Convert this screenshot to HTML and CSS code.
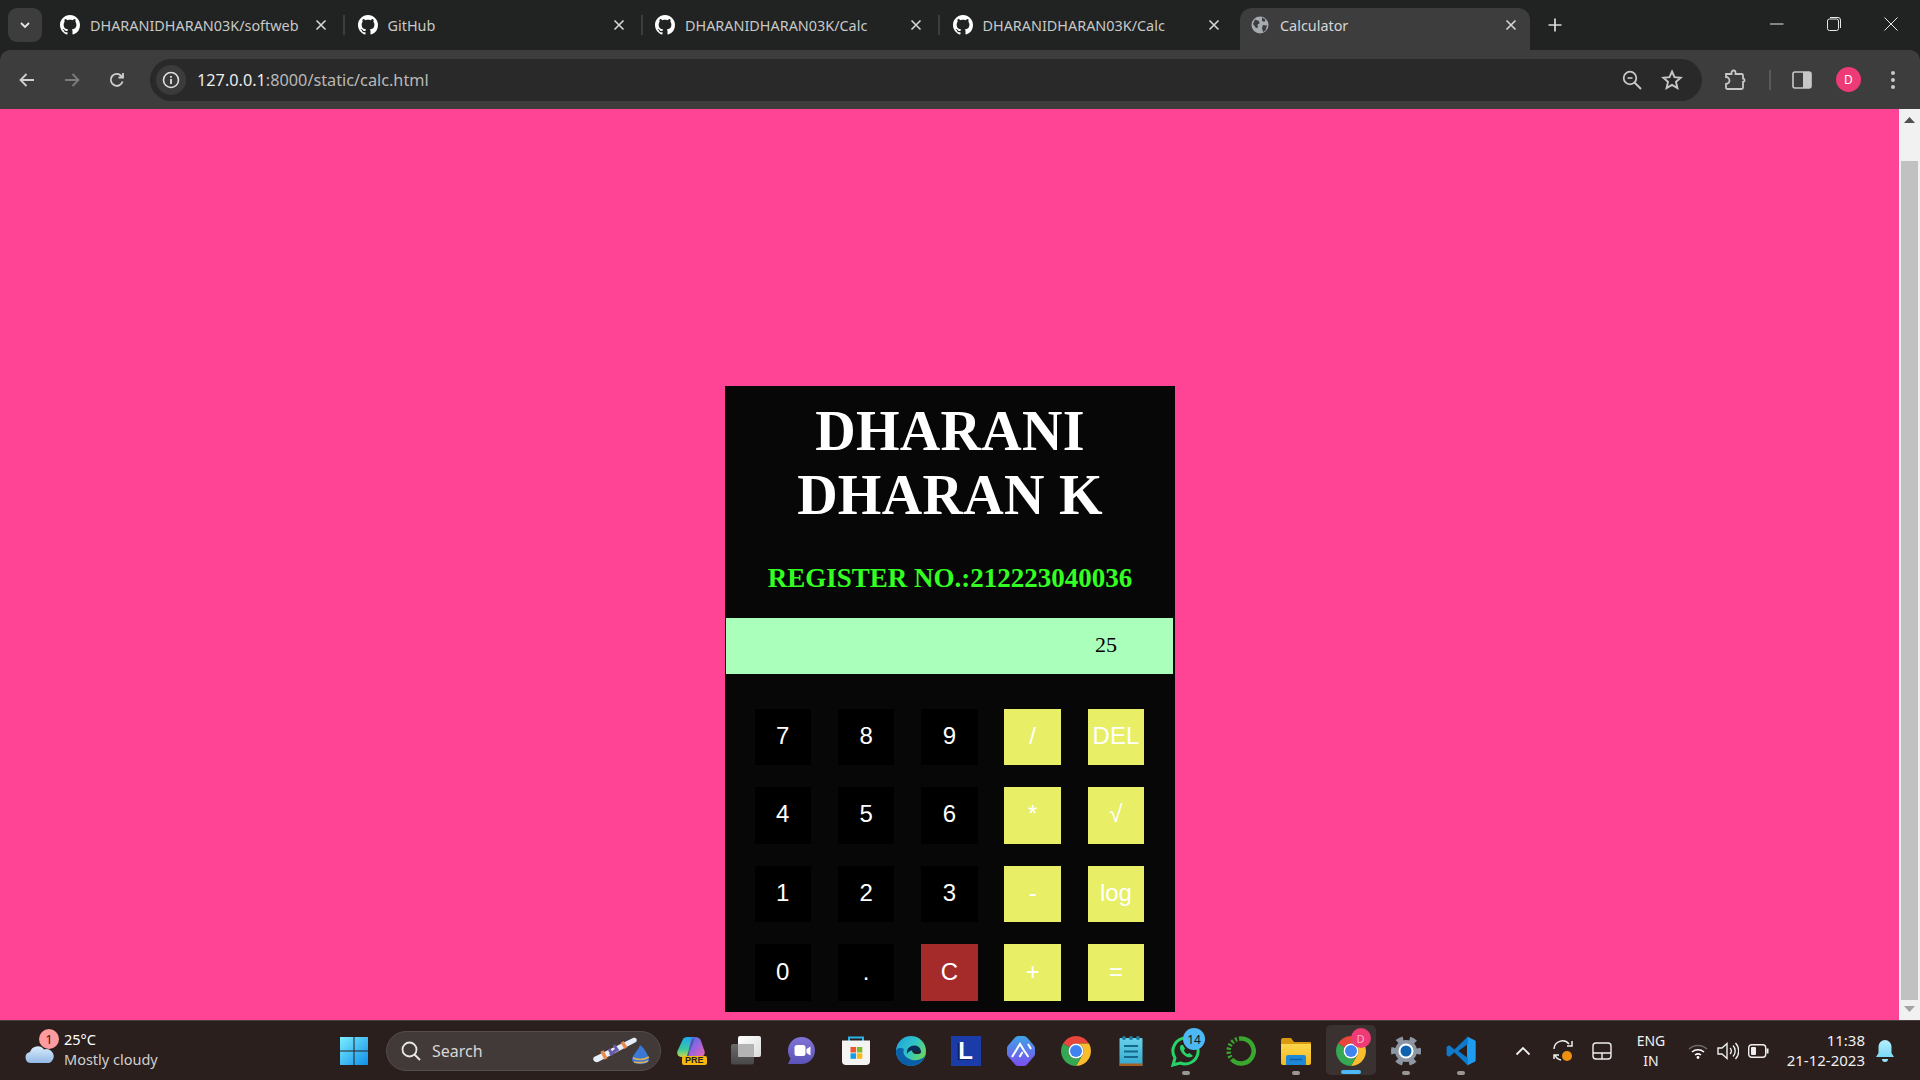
FILE: index.html
```html
<!DOCTYPE html>
<html lang="en">
<head>
<meta charset="utf-8">
<title>Calculator</title>
<link rel="stylesheet" href="styles.css">
</head>
<body>
<svg class="defs" width="0" height="0" aria-hidden="true">
  <defs>
    <symbol id="gh" viewBox="0 0 16 16"><path fill="#fff" d="M8 0C3.58 0 0 3.58 0 8c0 3.54 2.29 6.53 5.47 7.59.4.07.55-.17.55-.38 0-.19-.01-.82-.01-1.49-2.01.37-2.53-.49-2.69-.94-.09-.23-.48-.94-.82-1.13-.28-.15-.68-.52-.01-.53.63-.01 1.08.58 1.23.82.72 1.21 1.87.87 2.33.66.07-.52.28-.87.51-1.07-1.78-.2-3.64-.89-3.64-3.95 0-.87.31-1.59.82-2.15-.08-.2-.36-1.02.08-2.12 0 0 .67-.21 2.2.82.64-.18 1.32-.27 2-.27.68 0 1.36.09 2 .27 1.53-1.04 2.2-.82 2.2-.82.44 1.1.16 1.92.08 2.12.51.56.82 1.27.82 2.15 0 3.07-1.87 3.75-3.65 3.95.29.25.54.73.54 1.48 0 1.07-.01 1.93-.01 2.2 0 .21.15.46.55.38A8.013 8.013 0 0016 8c0-4.42-3.58-8-8-8z"/></symbol>
    <symbol id="x" viewBox="0 0 12 12"><path d="M1.5 1.5l9 9M10.5 1.5l-9 9" stroke="#d6d6d6" stroke-width="1.6" fill="none"/></symbol>
    <symbol id="chrome" viewBox="0 0 24 24">
      <path fill="#e8453c" d="M3.34 7A10 10 0 0 1 20.66 7H12A5 5 0 0 0 7.67 9.5Z"/>
      <path fill="#f9bc2d" d="M20.66 7A10 10 0 0 1 12 22L16.33 14.5A5 5 0 0 0 12 7Z"/>
      <path fill="#35a853" d="M3.34 7A10 10 0 0 0 12 22L16.33 14.5A5 5 0 0 1 7.67 9.5Z"/>
      <circle cx="12" cy="12" r="5" fill="#fff"/><circle cx="12" cy="12" r="4" fill="#3f83f0"/>
    </symbol>
    <linearGradient id="gWin" x1="0" y1="0" x2="1" y2="1"><stop offset="0" stop-color="#7beeff"/><stop offset="1" stop-color="#0f8ee8"/></linearGradient>
    <linearGradient id="gCloud" x1="0" y1="0" x2="0" y2="1"><stop offset="0" stop-color="#d9ecfb"/><stop offset="1" stop-color="#93b9e6"/></linearGradient>
    <linearGradient id="gCopL" x1="0" y1="0" x2="0" y2="1"><stop offset="0" stop-color="#1fa6ee"/><stop offset=".6" stop-color="#38c8a0"/><stop offset="1" stop-color="#c8d84a"/></linearGradient>
    <linearGradient id="gCopR" x1="0" y1="0" x2="1" y2="1"><stop offset="0" stop-color="#2f7fe8"/><stop offset=".5" stop-color="#9a62e0"/><stop offset="1" stop-color="#ee6aa8"/></linearGradient>
    <linearGradient id="gEdge" x1="0" y1="0" x2="1" y2=".6"><stop offset="0" stop-color="#1f9fe0"/><stop offset=".55" stop-color="#2fc4c8"/><stop offset="1" stop-color="#6cd65e"/></linearGradient>
    <linearGradient id="gMeet" x1="0" y1="0" x2="0" y2="1"><stop offset="0" stop-color="#8173d6"/><stop offset="1" stop-color="#5b53b8"/></linearGradient>
    <linearGradient id="gAnt" x1="0" y1="0" x2="0" y2="1"><stop offset="0" stop-color="#3fa4e6"/><stop offset="1" stop-color="#7a4ff0"/></linearGradient>
    <linearGradient id="gNote" x1="0" y1="0" x2="0" y2="1"><stop offset="0" stop-color="#68d0ea"/><stop offset="1" stop-color="#35a9d0"/></linearGradient>
    <linearGradient id="gBell" x1="0" y1="0" x2="0" y2="1"><stop offset="0" stop-color="#b5f0ff"/><stop offset="1" stop-color="#7ad8f5"/></linearGradient>
    <linearGradient id="gTvD" x1="0" y1="0" x2="0" y2="1"><stop offset="0" stop-color="#6a6a6a"/><stop offset="1" stop-color="#474747"/></linearGradient>
    <linearGradient id="gTvL" x1="0" y1="0" x2="1" y2="1"><stop offset="0" stop-color="#ffffff"/><stop offset="1" stop-color="#dcdcdc"/></linearGradient>
    <linearGradient id="gFold" x1="0" y1="0" x2="0" y2="1"><stop offset="0" stop-color="#fbd64a"/><stop offset="1" stop-color="#f2bb22"/></linearGradient>
  </defs>
</svg>

<header class="tabstrip">
  <button class="tab-search" type="button" aria-label="Search tabs">
    <svg width="12" height="12" viewBox="0 0 12 12"><path d="M2 4l4 4 4-4" fill="none" stroke="#e8e8e8" stroke-width="1.8"/></svg>
  </button>
  <div class="tab tab-sep">
    <svg class="fav" viewBox="0 0 16 16"><use href="#gh"/></svg><span class="tab-title">DHARANIDHARAN03K/softweb</span>
    <svg class="tab-x"><use href="#x"/></svg>
  </div>
  <div class="tab tab-sep">
    <svg class="fav" viewBox="0 0 16 16"><use href="#gh"/></svg><span class="tab-title">GitHub</span>
    <svg class="tab-x"><use href="#x"/></svg>
  </div>
  <div class="tab tab-sep">
    <svg class="fav" viewBox="0 0 16 16"><use href="#gh"/></svg><span class="tab-title">DHARANIDHARAN03K/Calc</span>
    <svg class="tab-x"><use href="#x"/></svg>
  </div>
  <div class="tab">
    <svg class="fav" viewBox="0 0 16 16"><use href="#gh"/></svg><span class="tab-title">DHARANIDHARAN03K/Calc</span>
    <svg class="tab-x"><use href="#x"/></svg>
  </div>
  <div class="tab tab-active">
    <svg class="fav" viewBox="0 0 20 20"><circle cx="10" cy="10" r="8.5" fill="#a6abb2"/><path fill="#3d3d3d" d="M5 4.5l4 1.5 .5 2.5-2 1 .5 3-2 .5-3-4zM12 2.5l3.5 2-1 2.5-2.500-1zM13 10l4 .5-1.500 5-2.500 1.500-1-4z"/></svg>
    <span class="tab-title tab-title-active">Calculator</span>
    <svg class="tab-x"><use href="#x"/></svg>
  </div>
  <svg class="new-tab" width="16" height="16" viewBox="0 0 16 16"><path d="M8 1.5v13M1.5 8h13" stroke="#dcdcdc" stroke-width="1.7"/></svg>
  <div class="win-controls">
    <svg width="14" height="14" viewBox="0 0 14 14"><path d="M0 7h13.5" stroke="#e8e8e8"/></svg>
    <svg width="14" height="14" viewBox="0 0 14 14"><rect x=".5" y="2" width="11" height="11.5" rx="2" fill="none" stroke="#e8e8e8"/><path d="M3 .5h8a2.500 2.500 0 0 1 2.500 2.500v8" fill="none" stroke="#e8e8e8"/></svg>
    <svg width="14" height="14" viewBox="0 0 14 14"><path d="M.5.5l13 13M13.500.5l-13 13" stroke="#e8e8e8"/></svg>
  </div>
</header>

<nav class="toolbar">
  <svg class="tool" viewBox="0 0 20 20"><path d="M17 10H4M9.5 4L3.500 10l6 6" fill="none" stroke="#d0d0d0" stroke-width="1.8"/></svg>
  <svg class="tool" viewBox="0 0 20 20"><path d="M3 10h13M10.5 4l6 6-6 6" fill="none" stroke="#7d7d7d" stroke-width="1.8"/></svg>
  <svg class="tool" viewBox="0 0 20 20"><path d="M15.6 11.5A6 6 0 1 1 14.300 5.800L16 7.500M16 3v4.500h-4.500" fill="none" stroke="#d0d0d0" stroke-width="1.8"/></svg>
  <div class="omnibox">
    <span class="info-chip">
      <svg width="18" height="18" viewBox="0 0 18 18"><circle cx="9" cy="9" r="7.5" fill="none" stroke="#e0e0e0" stroke-width="1.6"/><path d="M9 8v5M9 5v1.700" stroke="#e0e0e0" stroke-width="1.8"/></svg>
    </span>
    <span class="url"><b class="url-host">127.0.0.1</b>:8000/static/calc.html</span>
    <svg class="omni-zoom" width="22" height="22" viewBox="0 0 22 22"><circle cx="9" cy="9" r="6.3" fill="none" stroke="#c8c8c8" stroke-width="1.8"/><path d="M13.500 13.500L20 20" stroke="#c8c8c8" stroke-width="1.9"/><path d="M6.500 9h5" stroke="#c8c8c8" stroke-width="1.6"/></svg>
    <svg class="omni-star" width="22" height="22" viewBox="0 0 22 22"><path d="M11 2.500l2.500 5.700 6.200.6-4.700 4.100 1.400 6.100L11 15.900l-5.400 3.100 1.400-6.100-4.700-4.100 6.200-.6z" fill="none" stroke="#c8c8c8" stroke-width="1.9"/></svg>
  </div>
  <svg class="tool-ext" width="22" height="22" viewBox="0 0 22 22"><path d="M2 5h5.500V3.500a2 2 0 0 1 4 0V5H17.500a1.500 1.500 0 0 1 1.500 1.500V9.500h.5a2 2 0 0 1 0 3.500H19v5.500a1.500 1.500 0 0 1-1.500 1.500H3.500A1.500 1.500 0 0 1 2 18.500V15a3.500 3.500 0 0 0 0-7z" fill="none" stroke="#c8c8c8" stroke-width="1.8"/></svg>
  <span class="tool-sep"></span>
  <svg class="tool-side" width="20" height="20" viewBox="0 0 20 20"><rect x="1" y="2" width="18" height="16" rx="2" fill="none" stroke="#c8c8c8" stroke-width="1.6"/><path d="M11 2h6a2 2 0 0 1 2 2v12a2 2 0 0 1-2 2h-6z" fill="#c8c8c8"/></svg>
  <span class="avatar">D</span>
  <svg class="tool-menu" width="6" height="20" viewBox="0 0 6 20"><circle cx="3" cy="3" r="2" fill="#c8c8c8"/><circle cx="3" cy="10" r="2" fill="#c8c8c8"/><circle cx="3" cy="17" r="2" fill="#c8c8c8"/></svg>
</nav>

<div class="viewport">
  <main class="page">
    <section class="calc">
      <h1 class="calc-name">DHARANI<br>DHARAN K</h1>
      <h2 class="calc-reg">REGISTER NO.:212223040036</h2>
      <div class="calc-display">25</div>
      <div class="calc-keys">
        <button class="key" type="button">7</button>
        <button class="key" type="button">8</button>
        <button class="key" type="button">9</button>
        <button class="key key-op" type="button">/</button>
        <button class="key key-op" type="button">DEL</button>
        <button class="key" type="button">4</button>
        <button class="key" type="button">5</button>
        <button class="key" type="button">6</button>
        <button class="key key-op" type="button">*</button>
        <button class="key key-op" type="button">√</button>
        <button class="key" type="button">1</button>
        <button class="key" type="button">2</button>
        <button class="key" type="button">3</button>
        <button class="key key-op" type="button">-</button>
        <button class="key key-op" type="button">log</button>
        <button class="key" type="button">0</button>
        <button class="key" type="button">.</button>
        <button class="key key-clear" type="button">C</button>
        <button class="key key-op" type="button">+</button>
        <button class="key key-op" type="button">=</button>
      </div>
    </section>
  </main>
  <aside class="scrollbar">
    <svg width="11" height="6" viewBox="0 0 11 6"><path d="M5.5 0L11 6H0z" fill="#505050"/></svg>
    <div class="thumb"></div>
    <svg width="11" height="6" viewBox="0 0 11 6"><path d="M5.5 6L11 0H0z" fill="#a3a3a3"/></svg>
  </aside>
</div>

<footer class="taskbar">
  <div class="weather">
    <span class="weather-icon">
      <svg width="30" height="20" viewBox="0 0 30 20"><path d="M6 19a5.500 5.500 0 0 1-1-10.900A8 8 0 0 1 19 5.500 6.800 6.800 0 0 1 24 19z" fill="url(#gCloud)"/></svg>
      <span class="weather-badge">1</span>
    </span>
    <span class="weather-text"><span class="temp">25°C</span><span class="cond">Mostly cloudy</span></span>
  </div>
  <span class="tb-item">
    <svg width="30" height="30" viewBox="0 0 30 30"><path fill="url(#gWin)" d="M1 1h13.500v13.500H1zM15.500 1H29v13.500H15.500zM1 15.500h13.500V29H1zM15.500 15.500H29V29H15.500z"/></svg>
  </span>
  <div class="search">
    <svg width="22" height="22" viewBox="0 0 22 22"><circle cx="9.5" cy="9.5" r="7" fill="none" stroke="#e8e8e8" stroke-width="1.8"/><path d="M14.500 14.500L20 20" stroke="#e8e8e8" stroke-width="2"/></svg>
    <span class="search-label">Search</span>
    <svg class="search-art" width="66" height="32" viewBox="0 0 66 32">
      <path d="M3 22L42 3c3-1 5 2 3 4L7 27c-4 1-6-3-4-5z" fill="#e6eef8"/>
      <path d="M11 16l4 8M31 7l4 6" stroke="#e88a4c" stroke-width="3.5"/>
      <path d="M18 14l3 5M23 10l4 6M19 20l6-5" stroke="#6a5aa8" stroke-width="3"/>
      <path d="M49 10c5 3 9 12 9 15 0 5-16 6-17 0 0-5 6-9 8-15z" fill="#3b78d4"/>
      <path d="M42 23c5 2 11 2 16-1M43 27c5 1 10 1 14-1" stroke="#e0b050" stroke-width="1.6" fill="none"/>
    </svg>
  </div>
  <span class="tb-item tb-copilot">
    <svg width="28" height="20" viewBox="0 0 28 20"><path d="M6 2C7 .5 9 0 11 0h6L10 20H5C1 20-.5 17 .5 14z" fill="url(#gCopL)"/><path d="M14 0h4c3 0 5 1 6 4l3.500 10c1 3-1 6-4.500 6H11z" fill="url(#gCopR)"/><path d="M9 0h10c-3 1-4 3-5 6L11 15c-1 2-1 4-1 5l6-14c1-3 1-5 3-6z" fill="#1c1c22" opacity=".35"/></svg>
    <span class="pre">PRE</span>
  </span>
  <span class="tb-item">
    <svg width="32" height="30" viewBox="0 0 32 30"><rect x="1" y="8" width="23" height="20.500" rx="2" fill="url(#gTvD)"/><rect x="8" y="0" width="23" height="21" rx="2" fill="url(#gTvL)"/><rect x="8" y="8" width="16" height="13" rx="1" fill="#b4b4b4"/></svg>
  </span>
  <span class="tb-item">
    <svg width="30" height="30" viewBox="0 0 30 30"><path d="M15.500 1C23 1 29 7 29 14.500S23 28 15.500 28H2l2.500-5.500C2.800 20.200 2 17.500 2 14.500 2 7 8 1 15.500 1z" fill="url(#gMeet)"/><rect x="8.500" y="9" width="11" height="11" rx="2.500" fill="#fff"/><path d="M20.500 13l4-2.500v9l-4-2.500z" fill="#fff"/></svg>
  </span>
  <span class="tb-item">
    <svg width="30" height="30" viewBox="0 0 30 30"><path d="M8 6V1.500h14V6" fill="none" stroke="#2bb3e8" stroke-width="2"/><path d="M1 4.500h28V25a4 4 0 0 1-4 4H5a4 4 0 0 1-4-4z" fill="#f4f4f4"/><rect x="9.500" y="11" width="5.500" height="5.500" fill="#f0532e"/><rect x="15.800" y="11" width="5.500" height="5.500" fill="#7fba2a"/><rect x="9.500" y="17.300" width="5.500" height="5.500" fill="#0d9fe8"/><rect x="15.800" y="17.300" width="5.500" height="5.500" fill="#fcb913"/></svg>
  </span>
  <span class="tb-item">
    <svg width="30" height="30" viewBox="0 0 30 30"><circle cx="15" cy="15" r="15" fill="url(#gEdge)"/><path d="M0 15C0 24 7 30 15 30c7 0 12-4 14-10-4 4-9 5-13 4C9 22 6 17 8 13 4 11 1 12 0 15z" fill="#0b5ea8"/><path d="M11 18c-1-5 3-9 8-8.500 4 .5 6 3 6 7-1 1.500-5 2-7.500.5-1-1-1-2-1.500-2.500-2 0-4 1.500-5 3.500z" fill="#0a2c55"/><path d="M16 15.500c2-.5 6 0 9 1-1 1.500-5 2-7.500.5-1-1-1-1-1.500-1.500z" fill="#2a1f1d"/></svg>
  </span>
  <span class="tb-item"><span class="logo-l">L</span></span>
  <span class="tb-item">
    <svg width="28" height="30" viewBox="0 0 28 30"><path d="M8 1.500c1-1 2-1.500 3-1.500h6c1 0 2 .5 3 1.500l6.500 7.500c.8 1 1.500 2 1.500 3v6c0 1-.7 2-1.500 3L20 28.500c-1 1-2 1.500-3 1.500h-6c-1 0-2-.5-3-1.500L1.500 21C.7 20 0 19 0 18v-6c0-1 .7-2 1.500-3z" fill="url(#gAnt)"/><path d="M5 21L13 8l4 6.500M12.500 21l3-5M17 14.500l4.500 6.500M21 8l3 5" fill="none" stroke="#fff" stroke-width="2"/></svg>
  </span>
  <span class="tb-item"><svg width="30" height="30" viewBox="2 2 20 20"><use href="#chrome" width="24" height="24"/></svg></span>
  <span class="tb-item">
    <svg width="24" height="30" viewBox="0 0 24 30"><rect x=".5" y="2" width="23" height="28" rx="1" fill="url(#gNote)"/><rect x=".5" y="27.500" width="23" height="2.500" fill="#a85f24"/><circle cx="5" cy="2" r="2" fill="#1f7d9e"/><circle cx="12" cy="2" r="2" fill="#1f7d9e"/><circle cx="19" cy="2" r="2" fill="#1f7d9e"/><path d="M5 10h14M5 15.500h14M5 21h14" stroke="#116a8c" stroke-width="2.200"/></svg>
  </span>
  <span class="tb-item">
    <svg width="32" height="32" viewBox="0 0 32 32"><path d="M16 3a13 13 0 0 0-11 20L3 30l7.200-2A13 13 0 1 0 16 3z" fill="none" stroke="#27d366" stroke-width="3"/><path d="M11 10c-2 2-1 6 2.500 9.500S21 23 23 21l-3.500-3-2 1c-1.500-.5-3-2-3.500-3.500l1-2-2-3.500z" fill="#27d366"/></svg>
    <span class="tb-count">14</span><span class="tb-dot"></span>
  </span>
  <span class="tb-item">
    <svg width="30" height="30" viewBox="0 0 30 30"><path d="M15 2.500a12.500 12.500 0 1 1-9 21" fill="none" stroke="#3aa82e" stroke-width="4.500"/><path d="M15 2.500A12.500 12.500 0 0 0 6 23.500" fill="none" stroke="#3aa82e" stroke-width="4.500" stroke-dasharray="2 2"/></svg>
  </span>
  <span class="tb-item">
    <svg width="32" height="28" viewBox="0 0 32 28"><path d="M1 3a2 2 0 0 1 2-2h8l3 4h16a1 1 0 0 1 1 1v4H1z" fill="#d99a10"/><path d="M1 7h30v19a2 2 0 0 1-2 2H3a2 2 0 0 1-2-2z" fill="url(#gFold)"/><path d="M6 20a2 2 0 0 1 2-2h16a2 2 0 0 1 2 2v8H6z" fill="#1e88d8"/><path d="M10 22.500h12" stroke="#0d5fa8" stroke-width="1.500"/></svg>
    <span class="tb-dot"></span>
  </span>
  <span class="tb-item tb-active">
    <svg width="30" height="30" viewBox="2 2 20 20"><use href="#chrome" width="24" height="24"/></svg>
    <span class="tb-profile">D</span><span class="tb-bar"></span>
  </span>
  <span class="tb-item">
    <svg width="30" height="30" viewBox="0 0 30 30"><circle cx="15" cy="15" r="11" fill="#8d97a3"/><circle cx="15" cy="15" r="12.500" fill="none" stroke="#8d97a3" stroke-width="5" stroke-dasharray="6.500 6.590" stroke-dashoffset="3.250"/><circle cx="15" cy="15" r="7.500" fill="#fff"/><circle cx="15" cy="15" r="5.500" fill="#0f62b0"/></svg>
    <span class="tb-dot"></span>
  </span>
  <span class="tb-item">
    <svg width="30" height="30" viewBox="0 0 100 100"><path d="M70 2l26 12c2 1 3 3 3 5v62c0 2-1 4-3 5L70 98z" fill="#1f9cf0"/><path d="M73 2L28 45 11 31 2 36v28l9 5 17-14 45 43V73L41 50l32-23z" fill="#0e7acb"/></svg>
    <span class="tb-dot"></span>
  </span>
  <span class="tray tray-chevron"><svg width="16" height="10" viewBox="0 0 16 10"><path d="M1.500 8.500L8 2l6.500 6.500" fill="none" stroke="#f0f0f0" stroke-width="1.8"/></svg></span>
  <span class="tray tray-sync"><svg width="22" height="24" viewBox="0 0 22 24"><path d="M2 10a8.500 8.500 0 0 1 15-5M20 2v5h-5M2 20v-4h5M3 16a8 8 0 0 0 6 5" fill="none" stroke="#eee" stroke-width="1.5"/><circle cx="15" cy="17" r="5" fill="#f09010"/></svg></span>
  <span class="tray tray-pad"><svg width="20" height="18" viewBox="0 0 20 18"><rect x="1" y="1" width="18" height="16" rx="3" fill="none" stroke="#eee" stroke-width="1.4"/><path d="M1 11h18M10 11v6" stroke="#eee" stroke-width="1.4"/></svg></span>
  <span class="tray tray-lang"><span>ENG</span><span>IN</span></span>
  <span class="tray tray-wifi"><svg width="20" height="16" viewBox="0 0 20 16"><path d="M1 6a13 13 0 0 1 18 0" fill="none" stroke="#6a6a6a" stroke-width="1.5"/><path d="M4 9a9 9 0 0 1 12 0M7 12a5 5 0 0 1 6 0" fill="none" stroke="#fff" stroke-width="1.5"/><circle cx="10" cy="14.500" r="1.400" fill="#fff"/></svg></span>
  <span class="tray tray-vol"><svg width="22" height="20" viewBox="0 0 22 20"><path d="M1 7h4l5-4.500v15L5 13H1z" fill="none" stroke="#eee" stroke-width="1.4"/><path d="M13 7a4 4 0 0 1 0 6M16 4.500a8 8 0 0 1 0 11M18.500 2a11.500 11.500 0 0 1 0 16" fill="none" stroke="#eee" stroke-width="1.4"/></svg></span>
  <span class="tray tray-bat"><svg width="21" height="14" viewBox="0 0 21 14"><rect x=".7" y=".7" width="17" height="12.600" rx="3" fill="none" stroke="#eee" stroke-width="1.4"/><rect x="3" y="3" width="5" height="8" rx="1" fill="#eee"/><path d="M19.500 4.500v5" stroke="#eee" stroke-width="2"/></svg></span>
  <span class="tray tray-clock"><span>11:38</span><span>21-12-2023</span></span>
  <span class="tray tray-bell"><svg width="18" height="24" viewBox="0 0 18 24"><path d="M9 1a6.500 6.500 0 0 1 6.500 6.500V14l2.500 4H0l2.500-4V7.500A6.500 6.500 0 0 1 9 1z" fill="url(#gBell)"/><path d="M6 20h6a3 3 0 0 1-6 0z" fill="#9ae4fa"/></svg></span>
</footer>
</body>
</html>
```

FILE: styles.css
```css
* { box-sizing: border-box; }
html, body { margin: 0; height: 100%; }
body {
  width: 1920px;
  height: 1080px;
  overflow: hidden;
  display: flex;
  flex-direction: column;
  font-family: "Noto Sans", "Liberation Sans", sans-serif;
  background: #202322;
}
.defs { position: absolute; }

/* tab strip */
.tabstrip {
  height: 50px;
  flex: none;
  display: flex;
  align-items: stretch;
  background: #202322;
  padding-left: 8px;
}
.tab-search {
  width: 34px;
  height: 34px;
  margin: 8px 4.5px 0 0;
  padding: 0;
  border: 0;
  border-radius: 9px;
  background: #3d3d3d;
  display: flex;
  align-items: center;
  justify-content: center;
}
.tab {
  width: 297.5px;
  flex: none;
  position: relative;
  display: flex;
  align-items: center;
  padding: 0 17px 0 13.5px;
  color: #c8c8c8;
  font-size: 14.4px;
}
.tab-sep::after {
  content: "";
  position: absolute;
  right: -1px;
  top: 15px;
  width: 2px;
  height: 20px;
  background: #3c3e3e;
}
.fav { width: 20px; height: 20px; flex: none; margin-right: 10px; }
.tab-title { flex: 1; white-space: nowrap; overflow: hidden; }
.tab-title-active { color: #d6d6d6; }
.tab-x { width: 12px; height: 12px; flex: none; }
.tab-active {
  width: 290px;
  margin: 8px 4px 0 3.5px;
  padding: 0 13px 8px 10px;
  height: 42px;
  background: #3d3d3d;
  border-radius: 12px 12px 0 0;
}
.new-tab { align-self: center; margin-left: 13px; }
.win-controls {
  margin-left: auto;
  width: 150px;
  padding: 0 22px 0 0;
  margin-top: 17px;
  height: 14px;
  display: flex;
  justify-content: space-between;
}

/* toolbar */
.toolbar {
  height: 59px;
  flex: none;
  display: flex;
  align-items: center;
  background: #3d3d3d;
  border-radius: 10px 10px 0 0;
  padding-left: 17px;
}
.tool { width: 20px; height: 20px; flex: none; margin-right: 25px; }
.omnibox {
  width: 1552px;
  height: 42px;
  margin-left: -2px;
  border-radius: 21px;
  background: #292929;
  display: flex;
  align-items: center;
  padding-left: 6px;
  color: #b9b9b9;
  font-size: 16.25px;
}
.info-chip {
  width: 30px;
  height: 30px;
  border-radius: 50%;
  background: #3b3b3b;
  display: flex;
  align-items: center;
  justify-content: center;
  flex: none;
}
.url { margin-left: 11px; }
.url-host { font-weight: 400; color: #ececec; }
.omni-zoom { margin-left: auto; }
.omni-star { margin: 0 19px 0 18px; }
.tool-ext { margin-left: 22px; }
.tool-sep { width: 2px; height: 20px; margin-left: 23px; background: #5a5a5a; }
.tool-side { margin-left: 21px; }
.avatar {
  width: 25px;
  height: 25px;
  margin-left: 24px;
  border-radius: 50%;
  background: #ee3a76;
  color: #fff;
  font-size: 12px;
  display: flex;
  align-items: center;
  justify-content: center;
}
.tool-menu { margin-left: 29px; }

/* page */
.viewport { height: 911px; flex: none; display: flex; }
.page {
  flex: 1;
  background: #ff4495;
  display: flex;
  justify-content: center;
  align-items: flex-start;
  padding: 277px 0 0 1px;
}
.calc {
  width: 450px;
  height: 626px;
  background: #070707;
  padding-top: 13px;
  font-family: "Liberation Serif", serif;
}
.calc-name {
  margin: 0;
  font-size: 56px;
  line-height: 64px;
  font-weight: 700;
  letter-spacing: 0.3px;
  text-align: center;
  color: #fff;
}
.calc-reg {
  margin: 36px 0 0;
  font-size: 27px;
  line-height: 31px;
  font-weight: 700;
  text-align: center;
  color: #33ff22;
}
.calc-display {
  margin: 24px 0 0 1px;
  width: 447px;
  height: 56px;
  background: #aaffbb;
  color: #000;
  font-size: 22px;
  line-height: 54px;
  text-align: right;
  padding-right: 56px;
}
.calc-keys {
  display: grid;
  grid-template-columns: repeat(5, 56.4px);
  grid-auto-rows: 56.4px;
  column-gap: 26.9px;
  row-gap: 22.2px;
  margin: 34.7px 0 0 29.6px;
}
.key {
  margin: 0;
  padding: 0 0 2px;
  border: 0;
  background: #000;
  color: #fff;
  font-family: "Liberation Sans", sans-serif;
  font-size: 24px;
  white-space: nowrap;
  overflow: visible;
}
.key-op { background: #e8ee66; }
.key-clear { background: #a52a2a; }

/* scrollbar */
.scrollbar {
  width: 21px;
  flex: none;
  background: #f1f1f1;
  display: flex;
  flex-direction: column;
  align-items: center;
  padding: 8px 0;
}
.thumb { width: 17px; flex: 1; margin: 38px 0 6px; background: #c1c1c1; }

/* taskbar */
.taskbar {
  height: 60px;
  flex: none;
  display: flex;
  align-items: center;
  background: #2a1f1d;
  border-top: 1px solid #46403e;
  color: #fff;
  font-size: 14px;
}
.weather { width: 326.5px; flex: none; display: flex; align-items: center; height: 100%; padding-left: 24px; }
.weather-icon { position: relative; width: 40px; height: 44px; display: flex; align-items: flex-end; flex: none; padding: 0 0 9px 1px; }
.weather-badge {
  position: absolute;
  left: 15px;
  top: 0;
  width: 20px;
  height: 20px;
  border-radius: 50%;
  background: #ff9a9e;
  color: #222;
  font-size: 13px;
  display: flex;
  align-items: center;
  justify-content: center;
}
.weather-text { display: flex; flex-direction: column; line-height: 20px; margin-top: -3px; font-size: 14.5px; }
.temp { color: #fff; }
.cond { color: #d0cfce; }
.tb-item {
  width: 55px;
  height: 100%;
  flex: none;
  position: relative;
  display: flex;
  align-items: center;
  justify-content: center;
}
.search {
  width: 275px;
  height: 40px;
  margin: 0 2px 0 4.5px;
  border-radius: 20px;
  flex: none;
  background: #423a38;
  border: 1px solid #544c4a;
  display: flex;
  align-items: center;
  padding: 0 3px 0 13px;
}
.search-label { margin-left: 10px; color: #d8d6d5; font-size: 16px; }
.search-art { margin-left: auto; }
.pre {
  position: absolute;
  left: 19px;
  top: 35px;
  padding: 0 3px;
  height: 9px;
  background: #f6b810;
  border-radius: 2px;
  color: #222;
  font-size: 9px;
  font-weight: 700;
  line-height: 9px;
  font-family: "Liberation Sans", sans-serif;
}
.tb-copilot svg { margin-top: -8px; }
.logo-l {
  width: 30px;
  height: 30px;
  background: #1a3ba8;
  color: #fff;
  font-family: "Liberation Sans", sans-serif;
  font-size: 24px;
  font-weight: 700;
  display: flex;
  align-items: center;
  justify-content: center;
  text-shadow: -2px 1px 0 #0d2366;
}
.tb-count {
  position: absolute;
  left: 25px;
  top: 7px;
  width: 22px;
  height: 22px;
  border-radius: 50%;
  background: #4db8f5;
  color: #111;
  font-size: 12px;
  display: flex;
  align-items: center;
  justify-content: center;
}
.tb-dot {
  position: absolute;
  left: 24px;
  bottom: 5px;
  width: 8px;
  height: 4px;
  border-radius: 2px;
  background: #9a9694;
}
.tb-active::before {
  content: "";
  position: absolute;
  left: 2.5px;
  top: 4px;
  width: 50px;
  height: 50px;
  border-radius: 5px;
  background: #3a3230;
}
.tb-active svg { position: relative; }
.tb-profile {
  position: absolute;
  left: 27.5px;
  top: 7px;
  width: 20px;
  height: 20px;
  border-radius: 50%;
  background: #ee3a76;
  color: #ffb0c8;
  font-size: 11px;
  display: flex;
  align-items: center;
  justify-content: center;
}
.tb-bar {
  position: absolute;
  left: 17.5px;
  bottom: 6px;
  width: 20px;
  height: 4px;
  border-radius: 2px;
  background: #4db8f5;
}
.tray { height: 100%; flex: none; display: flex; align-items: center; justify-content: center; }
.tray-chevron { width: 40px; margin-left: 15px; }
.tray-sync { width: 40px; }
.tray-pad { width: 38px; }
.tray-lang { width: 60px; flex-direction: column; line-height: 20px; color: #f0f0f0; }
.tray-wifi { width: 34px; }
.tray-vol { width: 26px; }
.tray-bat { width: 34px; }
.tray-clock { width: 90px; flex-direction: column; align-items: flex-end; line-height: 20px; color: #f0f0f0; font-size: 15px; margin-top: -2px; }
.tray-bell { width: 40px; }
```
